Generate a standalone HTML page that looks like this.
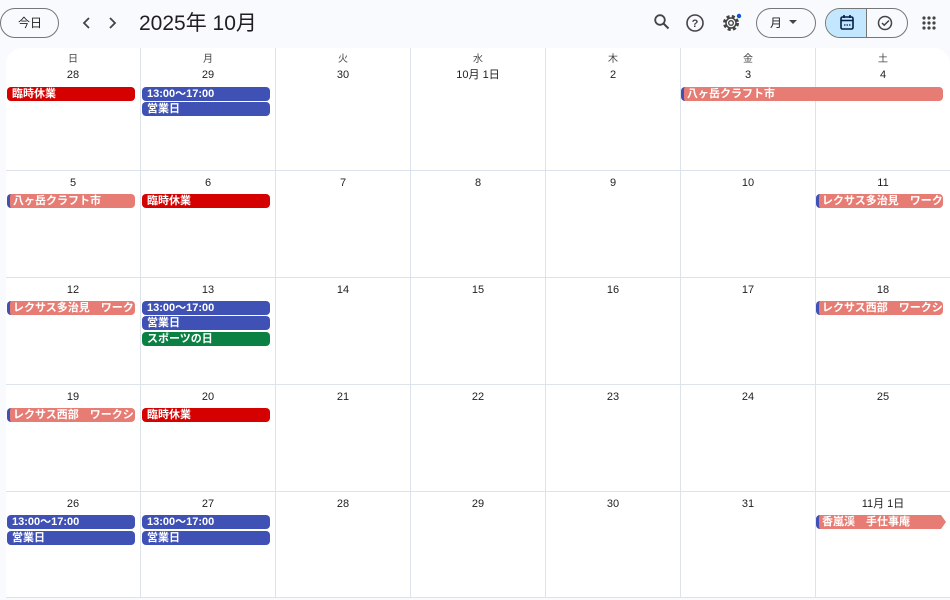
<!DOCTYPE html>
<html><head><meta charset="utf-8"><style>
*{box-sizing:border-box;margin:0;padding:0}
body{width:950px;height:600px;overflow:hidden;background:#f8fafd;font-family:"Liberation Sans","Noto Sans CJK JP",sans-serif;color:#1f1f1f;position:relative}
.abs{position:absolute}
.grid{position:absolute;left:6px;top:48px;width:944px;height:550px;background:#fff;border-radius:16px 16px 0 0;overflow:hidden;border-bottom:1px solid #dde3ea}
.v{position:absolute;top:0;bottom:0;width:1px;background:#dde3ea}
.h{position:absolute;left:0;right:0;height:1px;background:#dde3ea}
.wd{position:absolute;width:134px;text-align:center;font-size:10px;line-height:12px;color:#444746;top:6px}
.dn{position:absolute;width:134px;text-align:center;font-size:11px;line-height:12px;color:#1f1f1f}
.ev{position:absolute;height:14px;border-radius:4px;color:#fff;font-size:11px;font-weight:bold;line-height:14px;padding-left:5px;white-space:nowrap;overflow:hidden}
.r{background:#d50000}.b{background:#3f51b5}.g{background:#0b8043}.s{background:#e67c73;border-left:3px solid #3f51b5;padding-left:3px}
.btn{position:absolute;border:1px solid #747775;border-radius:18px;background:transparent}
</style></head><body>
<div class="btn" style="left:0;top:8px;width:59px;height:30px"></div>
<div class="abs" style="left:18px;top:16px;font-size:12px;line-height:14px">今日</div>
<svg class="abs" style="left:80px;top:14px" width="44" height="18"><path d="M9 4l-5 5 5 5" stroke="#444" stroke-width="1.8" fill="none"/><path d="M30 4l5 5-5 5" stroke="#444" stroke-width="1.8" fill="none"/></svg>
<div class="abs" style="left:139px;top:12px;font-size:21px;line-height:24px;color:#1f1f1f">2025年 10月</div>
<svg class="abs" style="left:653px;top:13px" width="18" height="18"><circle cx="7" cy="7" r="4.8" stroke="#444" stroke-width="1.8" fill="none"/><path d="M10.5 10.5l5 5" stroke="#444" stroke-width="2"/></svg>
<svg class="abs" style="left:685px;top:13px" width="20" height="20"><circle cx="10" cy="10" r="8" stroke="#444" stroke-width="1.6" fill="none"/><text x="10" y="14" font-size="11" text-anchor="middle" fill="#444" font-family="Liberation Sans" font-weight="bold">?</text></svg>
<svg class="abs" style="left:721px;top:12px" width="22" height="22"><circle cx="10" cy="11" r="6.5" stroke="#444" stroke-width="3" stroke-dasharray="3 2.2" fill="none"/><circle cx="10" cy="11" r="5" stroke="#444" stroke-width="1.5" fill="none"/><circle cx="10" cy="11" r="2.3" stroke="#444" stroke-width="1.4" fill="none"/><circle cx="18" cy="4" r="2.2" fill="#0b57d0"/></svg>
<div class="btn" style="left:756px;top:8px;width:60px;height:30px"></div>
<div class="abs" style="left:770px;top:16px;font-size:12px;line-height:14px">月</div>
<svg class="abs" style="left:789px;top:20px" width="8" height="5"><path d="M0 0h8L4 4z" fill="#444"/></svg>
<div class="btn" style="left:825px;top:8px;width:83px;height:30px;overflow:hidden"><div style="position:absolute;left:0;top:0;width:41px;height:30px;background:#c2e7ff;border-right:1px solid #747775"></div></div>
<svg class="abs" style="left:840px;top:15px" width="14" height="15"><rect x="1" y="2" width="12" height="12" rx="1.5" stroke="#041e49" stroke-width="1.6" fill="none"/><path d="M1 5.5h12M4 0v3M10 0v3" stroke="#041e49" stroke-width="1.6"/><path d="M4 10h1.5M6.5 10h1.5M9 10h1.5" stroke="#041e49" stroke-width="1.2"/></svg>
<svg class="abs" style="left:877px;top:15px" width="16" height="16"><circle cx="8" cy="8" r="6.5" stroke="#444" stroke-width="1.5" fill="none"/><path d="M5 8l2.2 2.2L12 5.5" stroke="#444" stroke-width="1.5" fill="none"/></svg>
<svg class="abs" style="left:922px;top:16px" width="14" height="14" fill="#444"><circle cx="2" cy="2" r="1.6"/><circle cx="7" cy="2" r="1.6"/><circle cx="12" cy="2" r="1.6"/><circle cx="2" cy="7" r="1.6"/><circle cx="7" cy="7" r="1.6"/><circle cx="12" cy="7" r="1.6"/><circle cx="2" cy="12" r="1.6"/><circle cx="7" cy="12" r="1.6"/><circle cx="12" cy="12" r="1.6"/></svg>

<div class="grid">
<div class="v" style="left:134px"></div><div class="v" style="left:269px"></div><div class="v" style="left:404px"></div><div class="v" style="left:539px"></div><div class="v" style="left:674px"></div><div class="v" style="left:809px"></div>
<div class="h" style="top:122px"></div><div class="h" style="top:229px"></div><div class="h" style="top:336px"></div><div class="h" style="top:443px"></div>

<div class="wd" style="left:0">日</div><div class="wd" style="left:135px">月</div><div class="wd" style="left:270px">火</div><div class="wd" style="left:405px">水</div><div class="wd" style="left:540px">木</div><div class="wd" style="left:675px">金</div><div class="wd" style="left:810px">土</div>

<div class="dn" style="left:0;top:21px">28</div><div class="dn" style="left:135px;top:21px">29</div><div class="dn" style="left:270px;top:21px">30</div><div class="dn" style="left:405px;top:21px">10月 1日</div><div class="dn" style="left:540px;top:21px">2</div><div class="dn" style="left:675px;top:21px">3</div><div class="dn" style="left:810px;top:21px">4</div>

<div class="dn" style="left:0;top:129px">5</div><div class="dn" style="left:135px;top:129px">6</div><div class="dn" style="left:270px;top:129px">7</div><div class="dn" style="left:405px;top:129px">8</div><div class="dn" style="left:540px;top:129px">9</div><div class="dn" style="left:675px;top:129px">10</div><div class="dn" style="left:810px;top:129px">11</div>

<div class="dn" style="left:0;top:236px">12</div><div class="dn" style="left:135px;top:236px">13</div><div class="dn" style="left:270px;top:236px">14</div><div class="dn" style="left:405px;top:236px">15</div><div class="dn" style="left:540px;top:236px">16</div><div class="dn" style="left:675px;top:236px">17</div><div class="dn" style="left:810px;top:236px">18</div>

<div class="dn" style="left:0;top:343px">19</div><div class="dn" style="left:135px;top:343px">20</div><div class="dn" style="left:270px;top:343px">21</div><div class="dn" style="left:405px;top:343px">22</div><div class="dn" style="left:540px;top:343px">23</div><div class="dn" style="left:675px;top:343px">24</div><div class="dn" style="left:810px;top:343px">25</div>

<div class="dn" style="left:0;top:450px">26</div><div class="dn" style="left:135px;top:450px">27</div><div class="dn" style="left:270px;top:450px">28</div><div class="dn" style="left:405px;top:450px">29</div><div class="dn" style="left:540px;top:450px">30</div><div class="dn" style="left:675px;top:450px">31</div><div class="dn" style="left:810px;top:450px">11月 1日</div>

<div class="ev r" style="left:1px;top:39px;width:128px">臨時休業</div>
<div class="ev b" style="left:136px;top:39px;width:128px">13:00〜17:00</div>
<div class="ev b" style="left:136px;top:54px;width:128px">営業日</div>
<div class="ev s" style="left:675px;top:39px;width:262px">八ヶ岳クラフト市</div>

<div class="ev s" style="left:1px;top:146px;width:128px">八ヶ岳クラフト市</div>
<div class="ev r" style="left:136px;top:146px;width:128px">臨時休業</div>
<div class="ev s" style="left:810px;top:146px;width:127px">レクサス多治見　ワークショップ</div>

<div class="ev s" style="left:1px;top:253px;width:128px">レクサス多治見　ワークショップ</div>
<div class="ev b" style="left:136px;top:253px;width:128px">13:00〜17:00</div>
<div class="ev b" style="left:136px;top:268px;width:128px">営業日</div>
<div class="ev g" style="left:136px;top:284px;width:128px">スポーツの日</div>
<div class="ev s" style="left:810px;top:253px;width:127px">レクサス西部　ワークショップ</div>

<div class="ev s" style="left:1px;top:360px;width:128px">レクサス西部　ワークショップ</div>
<div class="ev r" style="left:136px;top:360px;width:128px">臨時休業</div>

<div class="ev b" style="left:1px;top:467px;width:128px">13:00〜17:00</div>
<div class="ev b" style="left:1px;top:483px;width:128px">営業日</div>
<div class="ev b" style="left:136px;top:467px;width:128px">13:00〜17:00</div>
<div class="ev b" style="left:136px;top:483px;width:128px">営業日</div>
<div class="ev s" style="left:810px;top:467px;width:124px;border-radius:4px 0 0 4px">香嵐渓　手仕事庵</div>
<svg class="abs" style="left:934px;top:467px" width="6" height="14"><path d="M0 0h1l5 7-5 7H0z" fill="#e67c73"/></svg>
</div>
</body></html>
